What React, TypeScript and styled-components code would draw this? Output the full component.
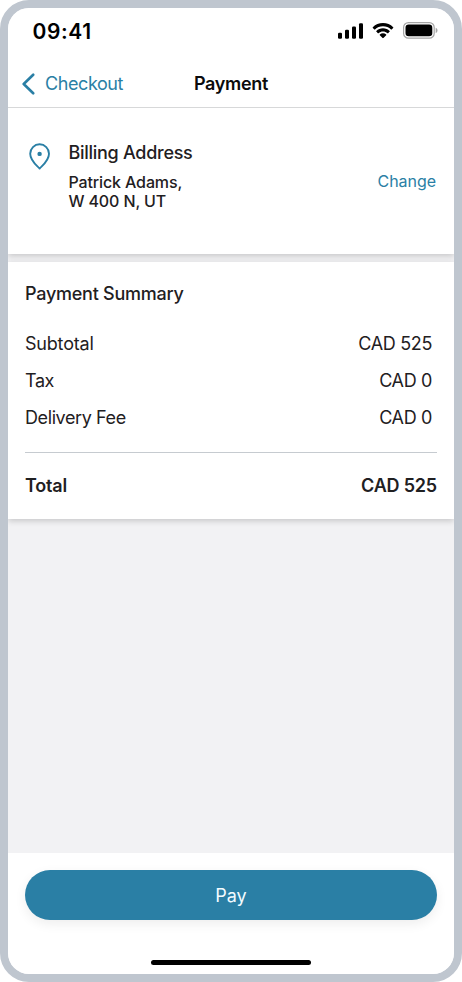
import React from 'react';
import styled, { createGlobalStyle } from 'styled-components';

const GlobalStyle = createGlobalStyle`
  * { box-sizing: border-box; }
  body { margin: 0; background: #fff; }
`;

const accent = '#2a7fa5';

const Phone = styled.main`
  width: 462px;
  height: 982px;
  display: flex;
  flex-direction: column;
  border: 8px solid #bfc6cf;
  border-radius: 29px;
  overflow: hidden;
  background: #f2f2f4;
  font-family: Inter, 'Liberation Sans', sans-serif;
  color: #1f2022;
`;

const Label = styled.span<{
  $size: number;
  $weight?: number;
  $track?: number;
  $line?: number;
  $color?: string;
}>`
  display: block;
  white-space: nowrap;
  font-size: ${(p) => p.$size}px;
  font-weight: ${(p) => p.$weight ?? 400};
  letter-spacing: ${(p) => p.$track ?? 0}px;
  line-height: ${(p) => p.$line ?? 24}px;
  color: ${(p) => p.$color ?? 'inherit'};
`;

const StatusBar = styled.header`
  height: 52px;
  flex: none;
  display: flex;
  justify-content: space-between;
  align-items: flex-start;
  padding: 11px 16px 0 24.5px;
  background: #fff;
`;

const StatusIcons = styled.div`
  display: flex;
  align-items: center;
  gap: 9px;
  height: 23px;
`;

const NavBar = styled.nav`
  height: 48px;
  flex: none;
  display: grid;
  grid-template-columns: 1fr auto 1fr;
  align-items: center;
  padding: 0 14px;
  background: #fff;
  border-bottom: 1px solid #d7d8d9;
  position: relative;
  z-index: 1;
`;

const BackButton = styled.button`
  display: flex;
  align-items: center;
  gap: 9px;
  padding: 0;
  border: 0;
  background: none;
  font-family: inherit;
  color: ${accent};
`;

const Card = styled.section`
  flex: none;
  background: #fff;
  box-shadow: 0 2px 6px rgba(0, 0, 0, 0.18);
`;

const AddressCard = styled(Card)`
  height: 146px;
  display: flex;
  padding: 33px 18px 0 21px;
`;

const AddressText = styled.div`
  flex: 1;
  padding-left: 17.4px;
`;

const AddressLines = styled.div`
  padding-top: 8px;
`;

const PinSlot = styled.div`
  width: 22px;
  padding-top: 2px;
`;

const ChangeLink = styled.button`
  align-self: flex-start;
  margin-top: 28px;
  padding: 0;
  border: 0;
  background: none;
  font-family: inherit;
  color: ${accent};
`;

const SummaryCard = styled(Card)`
  height: 257px;
  margin-top: 8px;
  padding: 20px 17px 0;
`;

const Rows = styled.div`
  display: flex;
  flex-direction: column;
  padding: 20px 5px 0 0;
`;

const Row = styled.div`
  height: 36.7px;
  display: flex;
  align-items: center;
  justify-content: space-between;
`;

const TotalRow = styled(Row)`
  height: 66px;
  margin-top: 16px;
  border-top: 1px solid #c6cbd0;
`;

const Footer = styled.footer`
  height: 121px;
  flex: none;
  margin-top: auto;
  display: flex;
  flex-direction: column;
  align-items: center;
  padding: 17px 17px 0;
  background: #fff;
`;

const PayButton = styled.button`
  width: 100%;
  height: 50px;
  display: flex;
  align-items: center;
  justify-content: center;
  padding: 2px 0 0;
  border: 0;
  border-radius: 25px;
  background: ${accent};
  box-shadow: 0 4px 12px rgba(0, 0, 0, 0.07);
  font-family: inherit;
  color: #f2fbff;
`;

const HomeIndicator = styled.div`
  width: 160px;
  height: 5px;
  margin-top: 40px;
  border-radius: 3px;
  background: #000;
`;

const SignalIcon = () => (
  <svg width="25" height="16" viewBox="0 0 25 16">
    <rect x="0" y="9.8" width="4" height="6" rx="1.2" />
    <rect x="7" y="6.7" width="4" height="9.1" rx="1.2" />
    <rect x="14" y="3.6" width="4" height="12.2" rx="1.2" />
    <rect x="21" y="0.3" width="4" height="15.5" rx="1.2" />
  </svg>
);

const WifiIcon = () => (
  <svg width="22" height="16" viewBox="0 0 22 16">
    <path d="M11 3.3c3.1 0 5.9 1.2 8 3.2.2.2.4.2.6 0l1.6-1.6c.2-.2.2-.5 0-.7C18.5 1.6 15 .1 11 .1S3.5 1.6.8 4.2c-.2.2-.2.5 0 .7l1.6 1.6c.2.2.4.2.6 0 2.1-2 4.9-3.2 8-3.2z" />
    <path d="M11 8.5c1.7 0 3.2.6 4.4 1.7.2.2.5.2.7 0l1.6-1.6c.2-.2.2-.5 0-.7C15.9 6.2 13.6 5.2 11 5.2s-4.9 1-6.7 2.7c-.2.2-.2.5 0 .7l1.6 1.6c.2.2.5.2.7 0C7.8 9.1 9.3 8.5 11 8.5z" />
    <path d="M14.2 12.2c.2-.2.2-.5 0-.7-.9-.7-2-1.2-3.2-1.2s-2.3.5-3.2 1.2c-.2.2-.2.5 0 .7l2.8 2.8c.2.2.6.2.8 0z" />
  </svg>
);

const BatteryIcon = () => (
  <svg width="35" height="17" viewBox="0 0 35 17">
    <rect x="0.6" y="0.6" width="30.6" height="15.6" rx="4.8" fill="none" stroke="#a5a5a5" strokeWidth="1.2" />
    <rect x="2.5" y="2.5" width="26.8" height="11.8" rx="3.2" />
    <path d="M32.7 5.8c1.1.4 1.8 1.4 1.8 2.6s-.7 2.2-1.8 2.6z" fill="#a5a5a5" />
  </svg>
);

const BackIcon = () => (
  <svg width="14" height="22" viewBox="0 0 14 22" fill="none" stroke={accent} strokeWidth="2.6">
    <path d="M11.2 1.7 1.7 11l9.5 9.3" strokeLinecap="round" strokeLinejoin="round" />
  </svg>
);

const PinIcon = () => (
  <svg width="22" height="27" viewBox="0 0 22 27">
    <path
      d="M10.6 25.5C7.3 22 1.2 17.5 1.2 10.7a9.4 9.4 0 0 1 18.8 0C20 17.5 13.9 22 10.6 25.5z"
      fill="none"
      stroke={accent}
      strokeWidth="1.9"
      strokeLinejoin="round"
    />
    <circle cx="10.6" cy="10.9" r="2.2" fill={accent} />
  </svg>
);

const charges = [
  { name: 'Subtotal', amount: 'CAD 525', nameTrack: -0.2 },
  { name: 'Tax', amount: 'CAD 0', nameTrack: -0.4 },
  { name: 'Delivery Fee', amount: 'CAD 0', nameTrack: -0.4 },
];

export default function App() {
  return (
    <>
      <GlobalStyle />
      <Phone>
        <StatusBar>
          <Label $size={21} $weight={600} $track={0.6} $line={25} $color="#000">09:41</Label>
          <StatusIcons>
            <SignalIcon />
            <WifiIcon />
            <BatteryIcon />
          </StatusIcons>
        </StatusBar>
        <NavBar>
          <BackButton>
            <BackIcon />
            <Label $size={18} $track={-0.42}>Checkout</Label>
          </BackButton>
          <Label $size={18} $weight={600} $track={-0.3} $color="#0b0b0c">Payment</Label>
        </NavBar>
        <AddressCard>
          <PinSlot>
            <PinIcon />
          </PinSlot>
          <AddressText>
            <Label $size={18} $weight={500} $track={-0.27}>Billing Address</Label>
            <AddressLines>
              <Label $size={16} $weight={500} $track={-0.12} $line={19}>Patrick Adams,</Label>
              <Label $size={16} $weight={500} $track={-0.12} $line={19}>W 400 N, UT</Label>
            </AddressLines>
          </AddressText>
          <ChangeLink>
            <Label $size={16} $track={-0.05}>Change</Label>
          </ChangeLink>
        </AddressCard>
        <SummaryCard>
          <Label $size={18} $weight={500} $track={-0.25}>Payment Summary</Label>
          <Rows>
            {charges.map((charge) => (
              <Row key={charge.name}>
                <Label $size={18} $track={charge.nameTrack}>{charge.name}</Label>
                <Label $size={18} $track={-0.35}>{charge.amount}</Label>
              </Row>
            ))}
          </Rows>
          <TotalRow>
            <Label $size={18} $weight={600} $track={-0.2}>Total</Label>
            <Label $size={18} $weight={600} $track={-0.2}>CAD 525</Label>
          </TotalRow>
        </SummaryCard>
        <Footer>
          <PayButton>
            <Label $size={18} $track={0}>Pay</Label>
          </PayButton>
          <HomeIndicator />
        </Footer>
      </Phone>
    </>
  );
}
